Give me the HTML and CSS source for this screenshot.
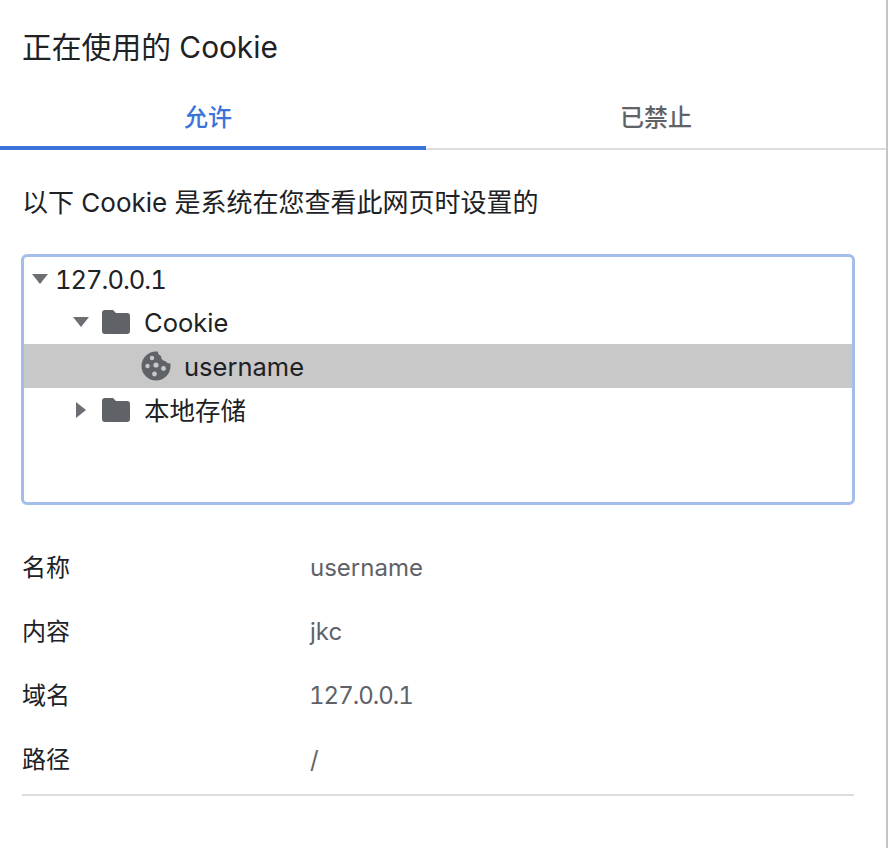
FILE: index.html
```html
<!DOCTYPE html>
<html lang="zh-CN">
<head>
<meta charset="utf-8">
<title>正在使用的 Cookie</title>
<link rel="stylesheet" href="styles.css">
</head>
<body>
<main class="dialog">
  <h1 class="title">正在使用的 Cookie</h1>
  <div class="tabs">
    <div class="tab tab-active">允许</div>
    <div class="tab">已禁止</div>
  </div>
  <p class="desc">以下 Cookie 是系统在您查看此网页时设置的</p>
  <div class="tree">
    <div class="row level-0">
      <svg class="arrow" viewBox="0 0 16 16"><path d="M0 3h16L8 13z"/></svg>
      <span class="num">127.0.0.1</span>
    </div>
    <div class="row level-1">
      <svg class="arrow" viewBox="0 0 16 16"><path d="M0 3h16L8 13z"/></svg>
      <svg class="folder" viewBox="0 0 28 24"><path d="M3 0h8l3 3h11a3 3 0 0 1 3 3v15a3 3 0 0 1-3 3H3a3 3 0 0 1-3-3V3a3 3 0 0 1 3-3z"/></svg>
      <span>Cookie</span>
    </div>
    <div class="row level-2 row-selected">
      <svg class="cookie" viewBox="0 0 30 30">
        <path class="cookie-body" d="M15 0.5c0.6 0 1.2 0 1.8 0.1c0 2.2 1.3 3.8 3.3 4.4c-0.2 2.7 1.7 5 4.5 5c0.4 1.4 2.3 2.4 4.8 2.6c0.1 0.8 0.1 1.6 0.1 2.4a14.5 14.5 0 1 1-14.5-14.5z"/>
        <circle class="cookie-hole" cx="11" cy="7" r="2.2"/>
        <circle class="cookie-hole" cx="6.5" cy="15" r="2.2"/>
        <circle class="cookie-hole" cx="15" cy="14" r="2.6"/>
        <circle class="cookie-hole" cx="22.5" cy="17.5" r="2.4"/>
        <circle class="cookie-hole" cx="13.5" cy="23" r="2.4"/>
      </svg>
      <span>username</span>
    </div>
    <div class="row level-1">
      <svg class="arrow" viewBox="0 0 16 16"><path d="M3 0v16L13 8z"/></svg>
      <svg class="folder" viewBox="0 0 28 24"><path d="M3 0h8l3 3h11a3 3 0 0 1 3 3v15a3 3 0 0 1-3 3H3a3 3 0 0 1-3-3V3a3 3 0 0 1 3-3z"/></svg>
      <span>本地存储</span>
    </div>
  </div>
  <dl class="details">
    <div class="detail"><dt>名称</dt><dd>username</dd></div>
    <div class="detail"><dt>内容</dt><dd>jkc</dd></div>
    <div class="detail"><dt>域名</dt><dd class="num">127.0.0.1</dd></div>
    <div class="detail"><dt>路径</dt><dd>/</dd></div>
  </dl>
</main>
</body>
</html>
```
FILE: styles.css
```css
* { box-sizing: border-box; }
html, body { margin: 0; padding: 0; background: #fff; }
body {
  width: 888px;
  height: 848px;
  overflow: hidden;
  font-family: Inter, "Noto Sans CJK SC", sans-serif;
  color: #202124;
}
.dialog {
  width: 888px;
  height: 848px;
  border-right: 2px solid #c4c4c4;
  display: flex;
  flex-direction: column;
}
.title {
  margin: 0;
  padding: 27px 0 0 22px;
  height: 88px;
  font-size: 29.8px;
  line-height: 40px;
  font-weight: 400;
}
.tabs {
  display: flex;
  height: 62px;
  border-bottom: 2px solid #dadce0;
}
.tab {
  flex: 0 0 auto;
  width: 460px;
  height: 62px;
  text-align: center;
  font-size: 24px;
  font-weight: 500;
  line-height: 60px;
  color: #5f6368;
}
.tab-active {
  width: 426px;
  color: #3a74d8;
  border-bottom: 4px solid #3a74d8;
  padding-right: 10px;
}
.desc {
  margin: 0;
  padding: 35px 0 0 22px;
  height: 104px;
  font-size: 26px;
  line-height: 36px;
}
.tree {
  margin-left: 21px;
  width: 834px;
  height: 251px;
  border: 3px solid #a3bdec;
  border-radius: 6px;
  font-size: 25.5px;
  overflow: hidden;
}
.row {
  display: flex;
  align-items: center;
  height: 44px;
  line-height: 44px;
}
.row span { padding-top: 2px; }
.row:first-child { margin-top: -1px; padding-top: 2px; }
.num {
  font-variant-numeric: tabular-nums;
  letter-spacing: -1px;
}
.level-0 { padding-left: 8px; }
.level-1 { padding-left: 49px; }
.level-2 { padding-left: 117px; }
.row-selected { background: #c8c8c9; }
.arrow {
  width: 16px;
  height: 16px;
  fill: #6b6e73;
  margin-right: 7px;
}
.level-1 .arrow { margin-right: 13px; }
.folder {
  width: 28px;
  height: 24px;
  fill: #5f6368;
  margin-right: 14px;
}
.cookie {
  width: 30px;
  height: 30px;
  margin-right: 13px;
}
.cookie-body { fill: #5f6368; }
.cookie-hole { fill: #c8c8c9; }
.details {
  margin: 31px 0 0 22px;
  width: 832px;
  border-bottom: 2px solid #dadce0;
  padding-bottom: 2px;
}
.detail {
  display: flex;
  height: 64px;
  align-items: center;
  font-size: 24px;
  line-height: 64px;
}
.detail dt { width: 288px; color: #202124; }
.detail dd { margin: 0; color: #5f6368; }
.detail dd.num { margin-left: -1px; }
```
